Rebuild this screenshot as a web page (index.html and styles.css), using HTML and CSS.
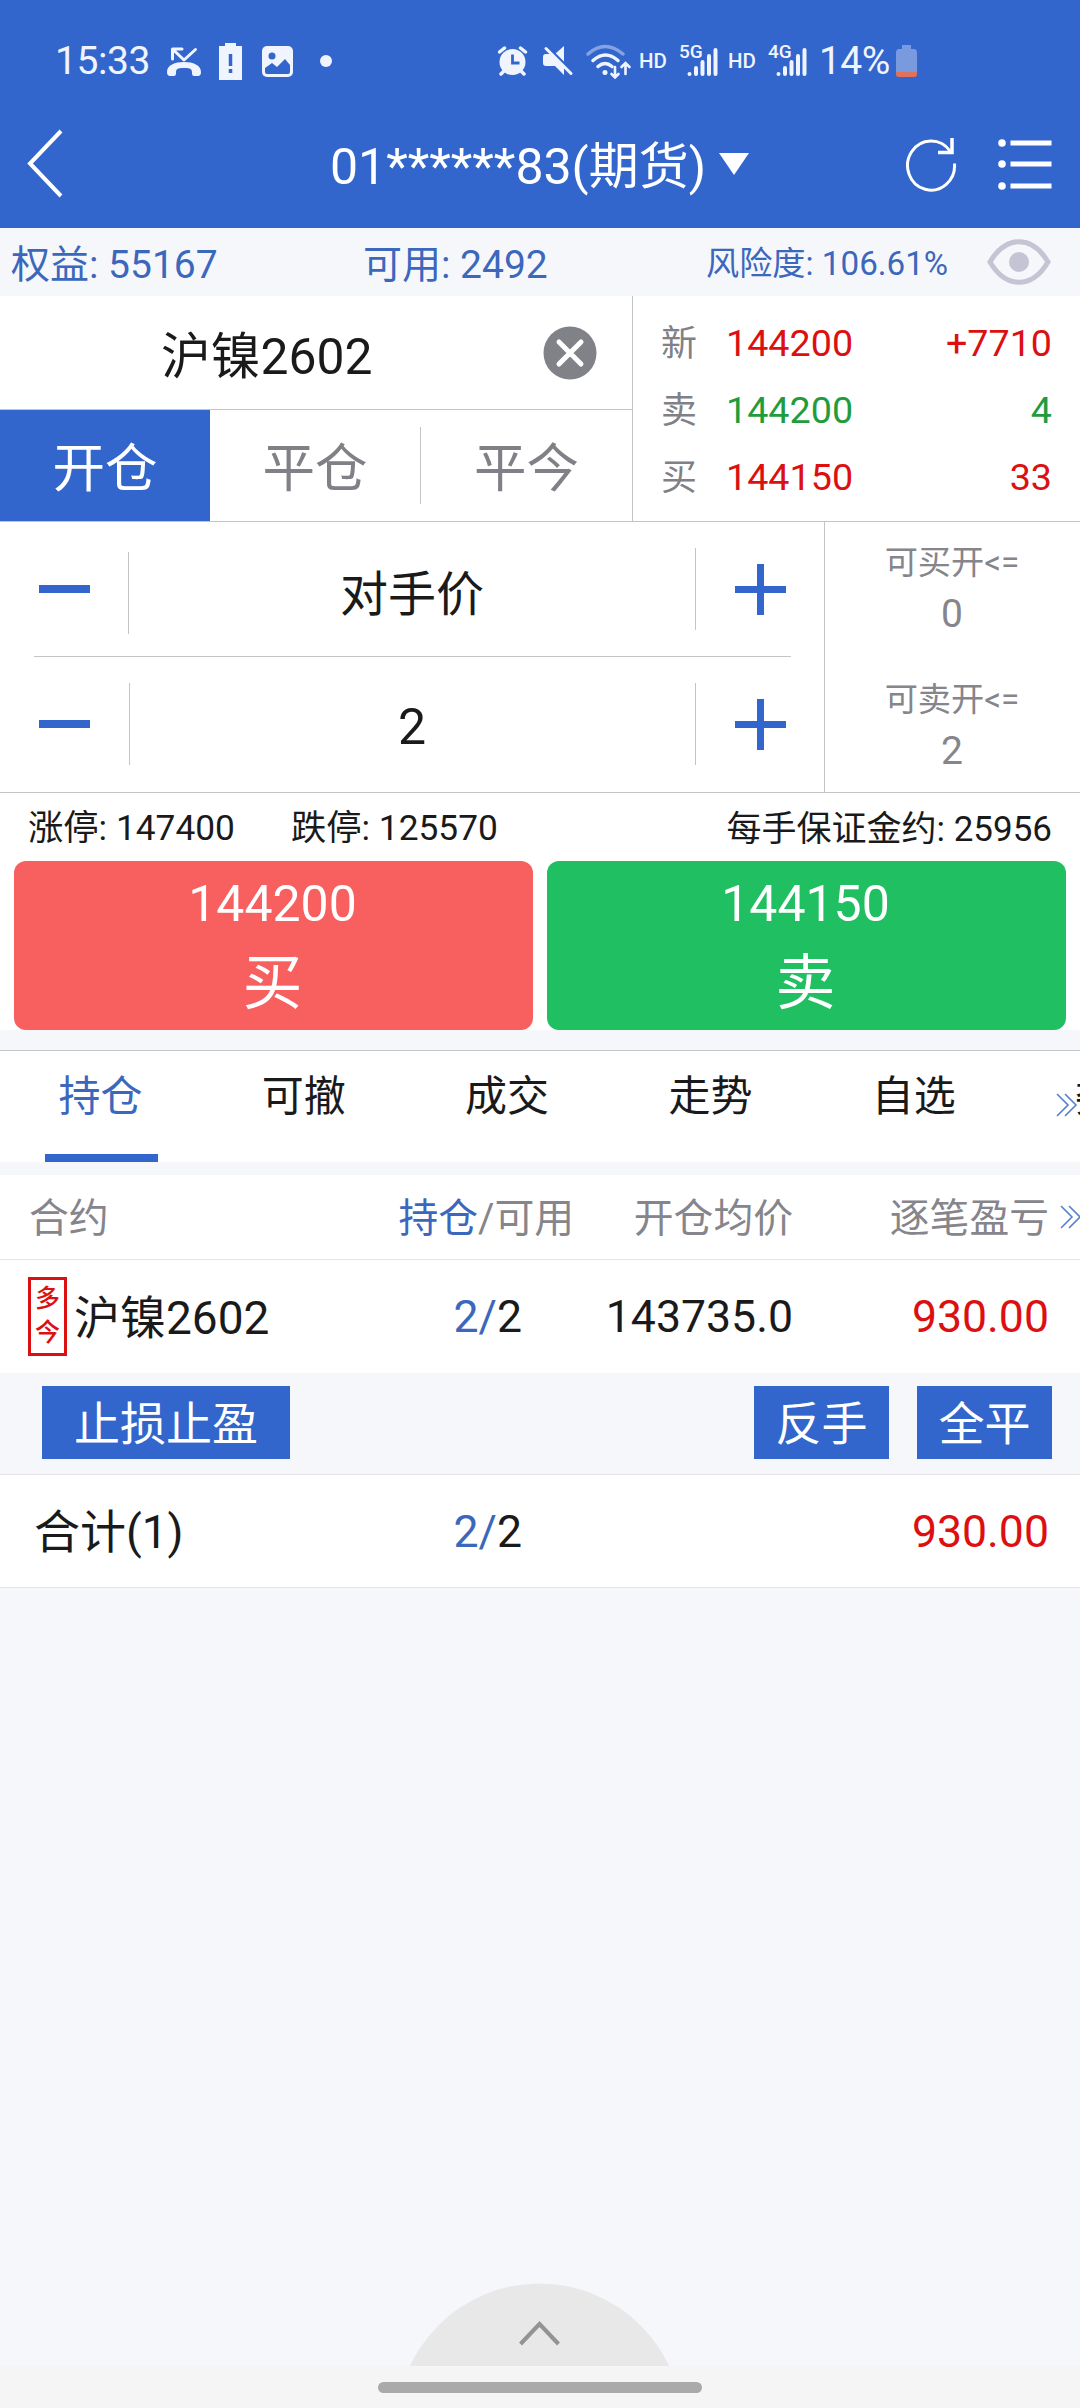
FILE: index.html
```html
<!DOCTYPE html>
<html lang="zh-CN">
<head>
<meta charset="utf-8">
<title>期货交易</title>
<link rel="stylesheet" href="styles.css">
</head>
<body>
<div class="screen">
  <header class="header">
    <div class="status">
      <div class="status-left">
        <span class="clock">15:33</span>
        <svg class="ic-call" width="34" height="32" viewBox="0 0 34 32"><path d="M28.500 4.500 17 15 6 4.500M5.500 14V4H15" fill="none" stroke="#f0f4ff" stroke-width="3" stroke-linecap="round" stroke-linejoin="round"/><path d="M0 27c0-7 8-10 17-10s17 3 17 10q0 4-3 4h-4q-2 0-2-3c0-4-1-5-8-5s-8 1-8 5q0 3-2 3H3q-3 0-3-4z" fill="#f0f4ff"/></svg>
        <svg class="ic-alert" width="24" height="38" viewBox="0 0 24 38"><path fill="#f0f4ff" d="M6 0h11v3h6v34H0V3h6z"/><path d="M11.500 11v12M11.500 26v4" stroke="#3266cc" stroke-width="3.500"/></svg>
        <svg class="ic-photo" width="32" height="32" viewBox="0 0 32 32"><rect width="31" height="31" rx="5" fill="#f0f4ff"/><circle cx="10" cy="10" r="3.500" fill="#3266cc"/><path d="M3 22l7-5 5 4 8-8 5 6v7q0 2-2 2H5q-2 0-2-2z" fill="#3266cc"/></svg>
        <i class="more-dot"></i>
      </div>
      <div class="status-right">
        <svg class="ic-alarm" width="30" height="30" viewBox="0 0 30 30"><circle cx="14.500" cy="16" r="13" fill="#f0f4ff"/><path d="M1.500 6 6.500 2M27.500 6 22.500 2M6 25l-3 3M23 25l3 3" stroke="#f0f4ff" stroke-width="3.500" stroke-linecap="round"/><path d="M14.500 8.500v8.500h7" fill="none" stroke="#3266cc" stroke-width="2.800"/></svg>
        <svg class="ic-mute" width="30" height="30" viewBox="0 0 30 30"><path d="M12 8l9-8v17zM3 8h4l14 13v8l-9-9H3q-3 0-3-3v-6q0-3 3-3z" fill="#f0f4ff"/><path d="M4.500 .5 30 26" stroke="#3266cc" stroke-width="2"/><path d="M3 2.500 28 27.500" stroke="#f0f4ff" stroke-width="3" stroke-linecap="round"/></svg>
        <svg class="ic-wifi" width="48" height="36" viewBox="0 0 48 36" fill="none" stroke-linecap="round"><path d="M2 10q17-15 35 0" stroke="#84a3e3" stroke-width="3.500"/><path d="M7 16.500q12.500-11 25 0M12 22.500q7-6 14 0" stroke="#f0f4ff" stroke-width="3.500"/><circle cx="19" cy="28.500" r="2.500" fill="#f0f4ff"/><path d="M29 23v10M25.500 30l3.500 3.500 3.500-3.500M39.500 30V19.500M35.500 23l4-4 4 4" stroke="#f0f4ff" stroke-width="2.600"/></svg>
        <span class="hd">HD</span>
        <span class="signal"><span class="net">5G</span><svg width="31" height="30" viewBox="0 0 31 30" stroke="#f0f4ff" stroke-width="4" stroke-linecap="round"><path d="M2.500 26v0M9 20v6M15.500 14v12M22 8v18M28.500 2v24"/></svg></span>
        <span class="hd">HD</span>
        <span class="signal"><span class="net">4G</span><svg width="31" height="30" viewBox="0 0 31 30" stroke="#f0f4ff" stroke-width="4" stroke-linecap="round"><path d="M2.500 26v0M9 20v6M15.500 14v12M22 8v18M28.500 2v24"/></svg></span>
        <span class="clock pct">14%</span>
        <svg class="ic-batt" width="22" height="33" viewBox="0 0 22 33"><path d="M6 0h9v4h3q3 0 3 4v19H0V8q0-4 3-4h3z" fill="#7a9ae0"/><path d="M0 27h21v2q0 3-3 3H3q-3 0-3-3z" fill="#e0725c"/></svg>
      </div>
    </div>
    <div class="titlebar">
      <svg class="back" width="38" height="70" viewBox="0 0 38 70"><path d="M35 2 4 34.500 35 67" fill="none" stroke="#fff" stroke-width="4"/></svg>
      <div class="account">01******83(期货)<i class="caret"></i></div>
      <svg class="refresh" width="54" height="56" viewBox="0 0 54 56" fill="none" stroke="#fff"><path d="M50.500 27.500A23.500 24.500 0 1 1 46 15" stroke-width="3"/><path d="M48 2v14.500H34" stroke-width="3.500"/></svg>
      <svg class="menu" width="54" height="52" viewBox="0 0 54 52"><g fill="#fff"><circle cx="4" cy="5" r="3.800"/><circle cx="4" cy="26" r="3.800"/><circle cx="4" cy="48" r="3.800"/><path d="M12.500 2.500h41v5h-41zM12.500 23.500h41v5h-41zM12.500 45.500h41v5h-41z"/></g></svg>
    </div>
  </header>

  <section class="funds">
    <span class="equity">权益: 55167</span>
    <span class="avail">可用: 2492</span>
    <span class="risk">风险度: 106.61%</span>
    <svg class="eye" width="64" height="46" viewBox="0 0 64 46"><path d="M3 23C19-4 45-4 61 23 45 50 19 50 3 23z" fill="none" stroke="#c4c4d4" stroke-width="5"/><circle cx="32" cy="23" r="10" fill="#c4c4d4"/></svg>
  </section>

  <section class="top">
    <div class="pick">
      <div class="symbol"><span>沪镍2602</span>
        <svg class="clear" width="54" height="54" viewBox="0 0 54 54"><circle cx="27" cy="27" r="26.500" fill="#818188"/><path d="M16 16 38 38M38 16 16 38" stroke="#fff" stroke-width="5" stroke-linecap="round"/></svg>
      </div>
      <div class="modes"><span class="on">开仓</span><span class="close-all">平仓</span><span>平今</span></div>
    </div>
    <div class="quotes">
      <div><label>新</label><b class="red">144200</b><b class="red">+7710</b></div>
      <div><label>卖</label><b class="green">144200</b><b class="green">4</b></div>
      <div><label>买</label><b class="red">144150</b><b class="red">33</b></div>
    </div>
  </section>

  <section class="order">
    <div class="steppers">
      <div class="step price"><span class="minus"></span><span class="bar"></span><span class="value cjk">对手价</span><span class="plus"></span></div>
      <div class="step qty"><span class="minus"></span><span class="bar"></span><span class="value">2</span><span class="plus"></span></div>
    </div>
    <div class="caps">
      <div><span>可买开&lt;=</span><strong>0</strong></div>
      <div><span>可卖开&lt;=</span><strong>2</strong></div>
    </div>
  </section>

  <section class="trade">
    <div class="limits"><span>涨停: 147400</span><span class="down">跌停: 125570</span><span class="margin">每手保证金约: 25956</span></div>
    <div class="buttons">
      <div class="btn buy"><span>144200</span><em>买</em></div>
      <div class="btn sell"><span>144150</span><em>卖</em></div>
    </div>
  </section>

  <nav class="tabs">
    <span class="active">持仓</span><span>可撤</span><span>成交</span><span>走势</span><span>自选</span><span>委托</span>
    <svg class="more" width="22" height="24" viewBox="0 0 22 24"><path d="M1 1 12 12 1 23M9 1 20 12 9 23" fill="none" stroke="#5580d0" stroke-width="1.600"/></svg>
  </nav>

  <section class="table">
    <div class="row head"><span class="c1">合约</span><span class="c2"><i>持仓</i>/可用</span><span class="c3">开仓均价</span><span class="c4">逐笔盈亏</span>
      <svg class="more" width="22" height="24" viewBox="0 0 22 24"><path d="M1 1 12 12 1 23M9 1 20 12 9 23" fill="none" stroke="#5580d0" stroke-width="1.600"/></svg>
    </div>
    <div class="row item"><span class="c1"><span class="tag"><u>多</u><u>今</u></span><span>沪镍2602</span></span><span class="c2"><i>2/</i>2</span><span class="c3">143735.0</span><span class="c4 red">930.00</span></div>
    <div class="actions"><span class="wide">止损止盈</span><span>反手</span><span>全平</span></div>
    <div class="row item sum"><span class="c1">合计(1)</span><span class="c2"><i>2/</i>2</span><span class="c3"></span><span class="c4 red">930.00</span></div>
  </section>

  <div class="drawer"><svg width="262" height="83" viewBox="0 0 262 83"><circle cx="130.500" cy="143.500" r="143" fill="#e8e8e9"/><path d="M111.500 61 130.500 41 149.500 61" fill="none" stroke="#939393" stroke-width="4"/></svg></div>
  <footer class="gesture"><i></i></footer>
</div>
</body>
</html>
```
FILE: styles.css
```css
* { box-sizing: border-box; }
body { margin: 0; }
i, em, u { font-style: normal; text-decoration: none; }
svg { display: block; flex: none; }
.screen {
  width: 1080px; height: 2408px; overflow: hidden;
  display: flex; flex-direction: column;
  background: #f6f7fa; color: #1a1a1a;
  font-family: Roboto, "Noto Sans CJK SC", sans-serif;
  white-space: nowrap; line-height: 1;
}
.red { color: #dc1010; }
.green { color: #1f9d3c; }

.header { height: 228px; background: #3266cc; color: #fff; }
.status { height: 100px; display: flex; padding-top: 40px; color: #f0f4ff; }
.status-left { display: flex; width: 498px; padding-left: 55px; }
.clock { font-size: 39px; line-height: 42px; width: 112px; letter-spacing: -.4px; }
.ic-call { margin-top: 5px; }
.ic-alert { margin: 3px 0 0 18px; }
.ic-photo { margin: 6px 0 0 19px; }
.more-dot { width: 12px; height: 12px; margin: 15px 0 0 26px; border-radius: 50%; background: #f0f4ff; }
.status-right { display: flex; }
.ic-alarm { margin-top: 6px; }
.ic-mute { margin: 6px 0 0 15px; }
.ic-wifi { margin: 4px 0 0 13px; }
.hd { width: 38px; padding-left: 5px; font-size: 20.500px; font-weight: 500; line-height: 42px; }
.hd + .signal { margin-left: 7px; }
.signal { display: flex; width: 44px; height: 40px; position: relative; padding: 8px 0 0 8px; }
.net { position: absolute; left: 0; top: 3px; font-size: 19px; font-weight: 500; line-height: 18px; }
.clock.pct { width: 84px; padding-left: 7px; letter-spacing: -.6px; }
.ic-batt { margin-top: 5px; }
.titlebar { height: 128px; display: flex; align-items: center; padding-left: 26px; }
.account { flex: 1; padding-left: 266px; display: flex; align-items: center; font-size: 50px; line-height: 60px; margin-top: 5px; }
.caret { margin: -5px 0 0 13px; border: 15px solid transparent; border-top: 22px solid #fff; border-bottom: 0; }
.refresh { margin-right: 40px; }
.menu { margin-right: 28px; }

.funds { height: 68px; display: flex; align-items: center; padding-left: 11px; color: #3b67bd; font-size: 39px; }
.funds span { padding-top: 6px; }
.equity { width: 352px; }
.avail { width: 343px; }
.funds .risk { width: 281px; font-size: 33.200px; padding-top: 3px; }

.top { height: 226px; display: flex; background: #fff; border-bottom: 1px solid #c2c5c8; }
.pick { width: 633px; border-right: 1px solid #c2c5c8; }
.symbol { height: 114px; display: flex; align-items: center; padding-left: 161px; font-size: 49.800px; border-bottom: 1px solid #c2c5c8; }
.symbol span { width: 382px; padding-top: 11px; }
.modes { height: 111px; display: grid; grid-template-columns: 210px 211px 211px; align-items: center; text-align: center; font-size: 52.500px; color: #808087; }
.modes .on { background: #3266cc; color: #fff; height: 111px; line-height: 119px; }
.close-all { height: 77px; line-height: 85px; border-right: 1px solid #c2c5c8; }
.modes span:last-child { height: 77px; line-height: 85px; }
.quotes { flex: 1; padding: 14px 28px 0 28px; }
.quotes div { height: 67px; display: flex; align-items: center; font-size: 37.700px; }
.quotes label { width: 65px; font-size: 36px; color: #808087; }
.quotes b { font-weight: 400; }
.quotes b:last-child { margin-left: auto; }

.order { height: 271px; display: flex; background: #fff; border-bottom: 1px solid #c2c5c8; }
.steppers { width: 825px; border-right: 1px solid #c2c5c8; padding: 0 33px 0 34px; }
.step { display: flex; align-items: flex-start; }
.price { height: 135px; border-bottom: 1px solid #c2c5c8; padding-top: 26px; }
.qty { height: 135px; padding-top: 26px; }
.minus { width: 51px; height: 8px; margin: 37px 38px 0 5px; background: #3266cc; }
.bar { width: 1px; height: 82px; background: #c2c5c8; }
.price .bar { margin-top: 4px; }
.qty .bar { margin: 0 -1px 0 1px; }
.value { width: 567px; height: 82px; border-right: 1px solid #c2c5c8; text-align: center; font-size: 50px; line-height: 88px; }
.value.cjk { font-size: 48px; line-height: 94px; }
.plus { width: 51px; height: 51px; margin: 16px 0 0 39px; background: linear-gradient(#3266cc, #3266cc) 50% 50% / 51px 7px no-repeat, linear-gradient(#3266cc, #3266cc) 50% 50% / 7px 51px no-repeat; }
.caps { flex: 1; padding: 23px 1px 0 0; }
.caps div { height: 137px; display: flex; flex-direction: column; align-items: center; color: #85858b; }
.caps span { font-size: 33.200px; line-height: 36px; }
.caps strong { font-weight: 400; font-size: 39px; line-height: 40px; margin-top: 13px; }

.trade { height: 237px; background: #fff; }
.limits { height: 68px; display: flex; align-items: center; padding: 4px 28px 0 28px; font-size: 35.300px; }
.down { margin-left: 56px; }
.margin { margin-left: auto; font-size: 35px; }
.buttons { display: flex; gap: 14px; padding: 0 14px; }
.btn { flex: 1; height: 169px; border-radius: 12px; color: #fff; display: flex; flex-direction: column; align-items: center; padding-top: 15px; }
.btn span { font-size: 50px; line-height: 57px; margin-left: -2px; }
.btn em { font-size: 60px; line-height: 70px; margin: 16px 0 0 -2px; }
.buy { background: #f85f5f; }
.sell { background: #20bf62; }

.tabs { position: relative; height: 112px; margin-top: 20px; display: flex; background: #fff; border-top: 1px solid #c2c5c8; }
.tabs span { flex: none; width: 113px; height: 111px; margin-right: 90.300px; text-align: center; text-indent: -2px; font-size: 42px; line-height: 92px; }
.tabs span:first-child { margin-left: 45px; }
.tabs .active { color: #3b67bd; border-bottom: 8px solid #3266cc; }
.more { position: absolute; right: 2px; top: 42px; }

.table { margin-top: 13px; background: #fff; }
.row { position: relative; display: grid; grid-template-columns: 350px 224px 219px 256px; padding-right: 31px; align-items: center; border-bottom: 1px solid #e4e5e8; }
.row i { color: #3b67bd; }
.row .c2, .row .c3, .row .c4 { text-align: right; }
.head { height: 85px; font-size: 39.800px; color: #85858b; padding-top: 3px; }
.head .c1 { padding-left: 29px; }
.head .more { right: -2px; top: 30px; }
.item { height: 113px; font-size: 44.600px; border: 0; padding-top: 2px; }
.item .c2 { padding-right: 52px; }
.item .c1 { display: flex; align-items: center; padding-left: 28px; font-size: 46px; }
.tag { width: 39px; height: 79px; margin: -3px 7px 0 0; border: 3px solid #dc1010; color: #dc1010; display: flex; flex-direction: column; align-items: center; justify-content: center; font-size: 25px; line-height: 34px; font-weight: 500; }
.actions { height: 101px; display: flex; gap: 28px; padding: 13px 28px 0 42px; background: #f6f7fa; }
.actions span { width: 135px; height: 73px; background: #3266cc; color: #fff; font-size: 46px; line-height: 77px; text-align: center; }
.actions .wide { width: 248px; margin-right: auto; }
.sum { height: 114px; border: solid #e4e5e8; border-width: 1px 0; }
.sum .c1 { padding-left: 34px; }

.drawer { margin-top: auto; padding-left: 409px; height: 83px; }
.gesture { height: 42px; background: #f5f5f5; padding: 16px 0 0 378px; }
.gesture i { display: block; width: 324px; height: 11px; border-radius: 6px; background: #aaa; }
```
